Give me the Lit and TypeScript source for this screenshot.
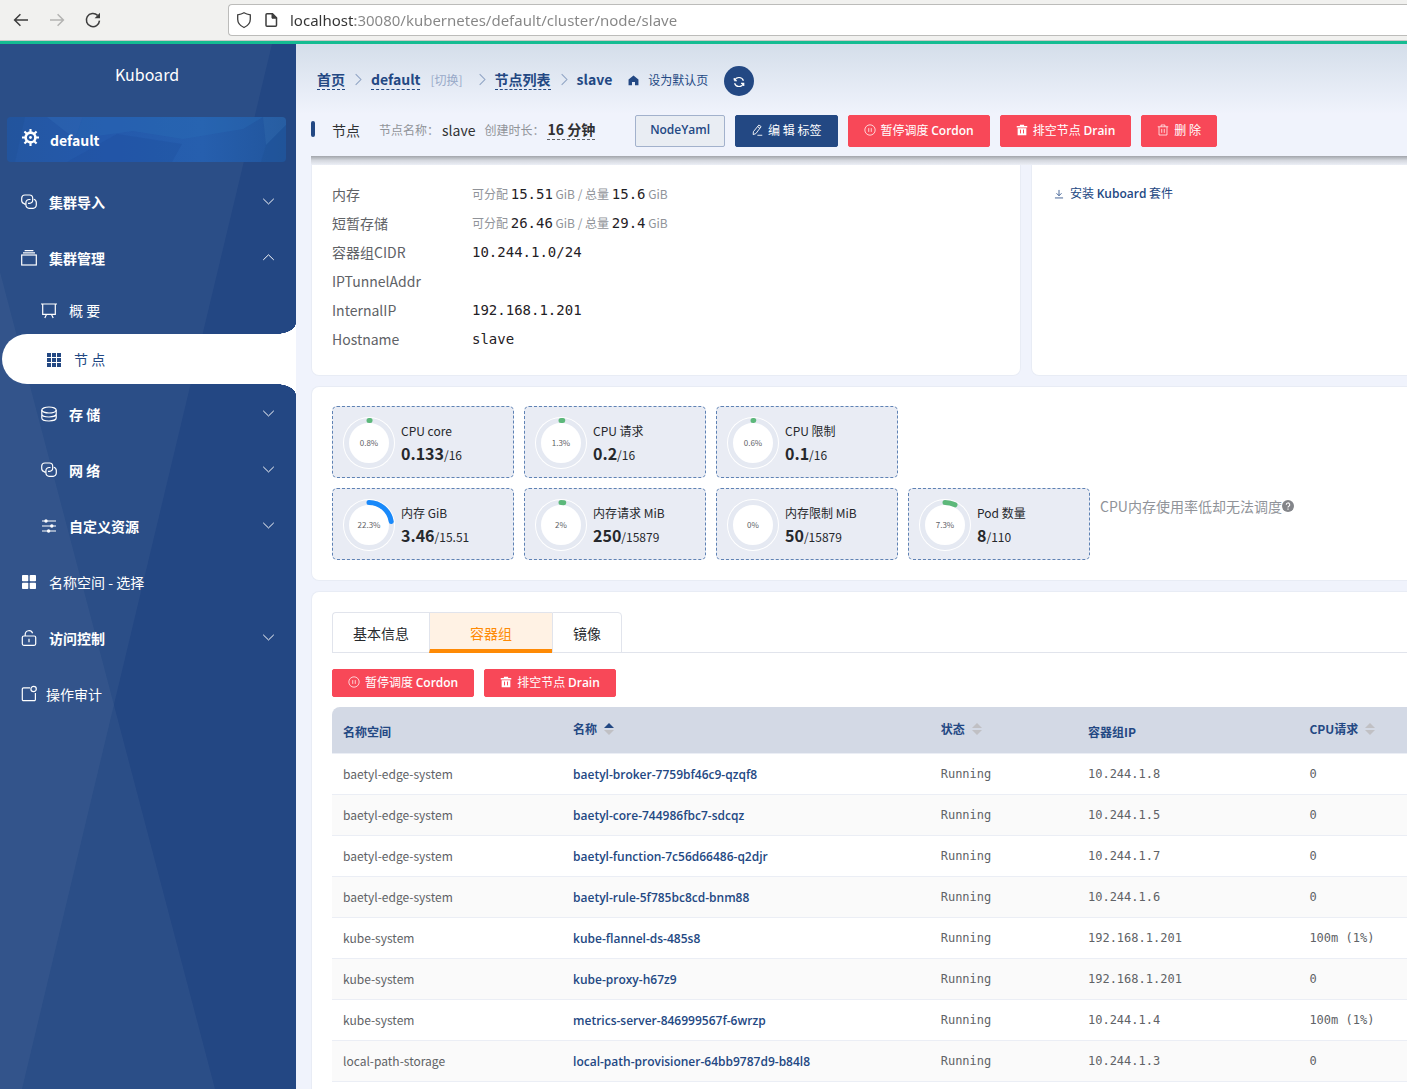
import { LitElement, html, css, svg, nothing } from 'lit';
import { customElement, state } from 'lit/decorators.js';
import { classMap } from 'lit/directives/class-map.js';

/* Outline icons on a 16-unit grid; they take the colour of the text around them. */
const shapes: Record<string, unknown> = {
  back: svg`<path d="M15 8H1.8M7.4 2.2 1.6 8l5.8 5.8" stroke-width="1.5"/>`,
  forward: svg`<path d="M1 8h13.2M8.6 2.2 14.4 8l-5.8 5.8" stroke-width="1.5"/>`,
  reload: svg`<path d="M14.5 8.6A6.6 6.6 0 1 1 12.6 3.4" stroke-width="1.5"/><path d="M15 .8v5.4H9.6z" fill="currentColor" stroke="none"/>`,
  shield: svg`<path d="M8 .8c2 1.2 4 1.700 6.300 2v4.500c0 3.500-2.500 6.500-6.300 8.200-3.800-1.700-6.300-4.700-6.300-8.200V2.800C4 2.500 6 2 8 .8z" stroke-width="1.300"/>`,
  page: svg`<path d="M4 1.700h5.500l4 4v7.600a1 1 0 0 1-1 1H4a1 1 0 0 1-1-1V2.700a1 1 0 0 1 1-1z" stroke-width="1.500"/><path d="M9 1.700v4.500h4.500z" fill="currentColor" stroke="currentColor"/>`,
  gear: svg`<circle cx="8" cy="8" r="4.600" stroke-width="2.400"/><circle cx="8" cy="8" r="1.300" fill="currentColor" stroke="none"/><path d="M8 0v3M8 13v3M0 8h3M13 8h3M2.300 2.300l2.200 2.200M11.500 11.500l2.200 2.200M2.300 13.700l2.200-2.200M11.500 4.500l2.200-2.200" stroke-width="2"/>`,
  link: svg`<path d="M4.800 10.200H3.900A3.200 3.200 0 0 1 3 9.500 3.200 3.200 0 0 1 .7 6.400V4A3.200 3.200 0 0 1 3.900 1h4.600a3.200 3.200 0 0 1 3.200 3.200v1.900a3.200 3.200 0 0 1-3.200 3.200H7"/><path d="M12.800 5.200c1.600.5 2.500 1.600 2.500 3.200v2.700a3.200 3.200 0 0 1-3.200 3.200H8.100a3.200 3.200 0 0 1-3.200-3.200V8.700a3.200 3.200 0 0 1 3.200-3.200H9.500"/>`,
  box: svg`<rect x=".7" y="5" width="14.600" height="10"/><path d="M2 2.900h12M3.600.6h8.800"/>`,
  board: svg`<path d="M0 2h16M1.700 2v10.300h12.600V2M5.500 12.500l-1.700 3.500M10.500 12.500l1.700 3.500"/>`,
  grid: svg`<path d="M1 2h4v4H1zM6 2h4v4H6zM11 2h4v4h-4zM1 7h4v4H1zM6 7h4v4H6zM11 7h4v4h-4zM1 12h4v4H1zM6 12h4v4H6zM11 12h4v4h-4z" fill="currentColor" stroke="none"/>`,
  disks: svg`<ellipse cx="8" cy="4" rx="7.200" ry="3"/><path d="M.8 4v8c0 1.700 3.200 3 7.200 3s7.200-1.300 7.200-3V4M.8 8c0 1.700 3.200 3 7.200 3s7.200-1.300 7.200-3"/>`,
  sliders: svg`<path d="M1 3h14M1 8h14M1 13h14"/><g fill="currentColor" stroke="none"><circle cx="5" cy="3" r="1.700"/><circle cx="10.800" cy="8" r="1.700"/><circle cx="7.600" cy="13" r="1.700"/></g>`,
  tiles: svg`<g fill="currentColor" stroke="none"><rect x="1" y="1" width="6.300" height="6.300" rx=".8"/><rect x="8.700" y="1" width="6.300" height="6.300" rx=".8"/><rect x="1" y="8.700" width="6.300" height="6.300" rx=".8"/><rect x="8.700" y="8.700" width="6.300" height="6.300" rx=".8"/></g>`,
  lock: svg`<rect x="1.300" y="6" width="13.400" height="9.300" rx="1.500"/><path d="M4.200 6V4.500A3.800 3.800 0 0 1 11.600 3.300M8 8.700v3.600"/>`,
  audit: svg`<path d="M9 1.800H2.500a1.200 1.200 0 0 0-1.200 1.200V13.500a1.200 1.200 0 0 0 1.200 1.200h10.700a1.200 1.200 0 0 0 1.200-1.200V7"/><circle cx="12.600" cy="3" r="2.700"/>`,
  down: svg`<path d="M1.500 4.700 8 11l6.500-6.300"/>`,
  up: svg`<path d="M1.500 11 8 4.700l6.500 6.300"/>`,
  right: svg`<path d="M4.500 1.500 11 8l-6.500 6.500" stroke-width="1.300"/>`,
  home: svg`<path d="M8 .8.8 6.700V15h5v-4.700h4.400V15h5V6.700z" fill="currentColor" stroke="none"/>`,
  refresh: svg`<path d="M1.700 5.500V2.600M1.700 6.300h3.600M2.200 6A6.200 6.200 0 0 1 13.900 6.300M14.300 13.400V9.700h-3.600M13.800 10A6.200 6.200 0 0 1 2.100 9.700" stroke-width="1.600"/>`,
  edit: svg`<path d="M10.500 1.300l3 2.200-7 9.300-3.600 1.300.3-3.900zM8.900 3.600l3 2.200M8.500 15h6.500" stroke-width="1.200"/>`,
  pause: svg`<circle cx="8" cy="8" r="6.900"/><path d="M6.300 5.500v5M9.700 5.500v5"/>`,
  binSolid: svg`<path d="M1 2.800h4.200V1h5.600v1.800H15v1.700H1zM2.200 5.500h11.600V15H2.200z" fill="currentColor" stroke="none"/><path d="M6 7.500v5M10 7.500v5" stroke="#f84858" stroke-width="1.300"/>`,
  bin: svg`<path d="M1 3.700h14M5.500 3.500V1.300h5v2.200M2.700 3.700v11h10.600v-11M6.300 6.500v5.300M9.700 6.500v5.300"/>`,
  download: svg`<path d="M8 1.500v9M4 6.800l4 4 4-4M1.500 14.300h13" stroke-width="1.300"/>`,
  help: svg`<circle cx="8" cy="8" r="8" fill="currentColor" stroke="none"/><path d="M5.700 6.200a2.300 2.300 0 1 1 3.400 2c-.8.400-1.100.8-1.100 1.700M8 11.300v1.600" stroke="#fff" stroke-width="1.500"/>`,
};

const icon = (name: string, cls = '') => html`<svg class="icon ${cls}" viewBox="0 0 16 16" aria-hidden="true">${shapes[name]}</svg>`;

interface MenuItem { label: string; icon: string; level?: number; kind: 'group' | 'leaf'; open?: boolean; active?: boolean; tight?: boolean; }

const menu: MenuItem[] = [
  { label: '集群导入', icon: 'link', kind: 'group' },
  { label: '集群管理', icon: 'box', kind: 'group', open: true },
  { label: '概 要', icon: 'board', kind: 'leaf', level: 2 },
  { label: '节 点', icon: 'grid', kind: 'leaf', level: 2, active: true },
  { label: '存 储', icon: 'disks', kind: 'group', level: 2 },
  { label: '网 络', icon: 'link', kind: 'group', level: 2 },
  { label: '自定义资源', icon: 'sliders', kind: 'group', level: 2 },
  { label: '名称空间 - 选择', icon: 'tiles', kind: 'leaf' },
  { label: '访问控制', icon: 'lock', kind: 'group' },
  { label: '操作审计', icon: 'audit', kind: 'leaf', tight: true },
];

const gauges = [
  [
    { label: 'CPU core', used: '0.133', total: '16', percent: 0.8 },
    { label: 'CPU 请求', used: '0.2', total: '16', percent: 1.3 },
    { label: 'CPU 限制', used: '0.1', total: '16', percent: 0.6 },
  ],
  [
    { label: '内存 GiB', used: '3.46', total: '15.51', percent: 22.3 },
    { label: '内存请求 MiB', used: '250', total: '15879', percent: 2 },
    { label: '内存限制 MiB', used: '50', total: '15879', percent: 0 },
    { label: 'Pod 数量', used: '8', total: '110', percent: 7.3 },
  ],
];

const pods = [
  ['baetyl-edge-system', 'baetyl-broker-7759bf46c9-qzqf8', '10.244.1.8', '0'],
  ['baetyl-edge-system', 'baetyl-core-744986fbc7-sdcqz', '10.244.1.5', '0'],
  ['baetyl-edge-system', 'baetyl-function-7c56d66486-q2djr', '10.244.1.7', '0'],
  ['baetyl-edge-system', 'baetyl-rule-5f785bc8cd-bnm88', '10.244.1.6', '0'],
  ['kube-system', 'kube-flannel-ds-485s8', '192.168.1.201', '100m (1%)'],
  ['kube-system', 'kube-proxy-h67z9', '192.168.1.201', '0'],
  ['kube-system', 'metrics-server-846999567f-6wrzp', '10.244.1.4', '100m (1%)'],
  ['local-path-storage', 'local-path-provisioner-64bb9787d9-b84l8', '10.244.1.3', '0'],
];

const base = css`
  * { box-sizing: border-box; }
  .icon { width: 16px; height: 16px; flex: none; fill: none; stroke: currentColor; stroke-width: 1; overflow: visible; }
  button, input { font: inherit; color: inherit; margin: 0; }
  button { cursor: pointer; background: none; border: 0; padding: 0; }
  a { color: inherit; text-decoration: none; }
`;

@customElement('browser-bar')
class BrowserBar extends LitElement {
  static styles = [base, css`
    :host { display: block; }
    .bar { display: flex; align-items: center; height: 44px; padding: 0 0 1px 12px; background: #f1f1ef; border-bottom: 3px solid #15bc92; box-shadow: inset 0 -1px #c9c9c7; color: #3d3d3d; }
    .nav { display: flex; width: 36px; height: 32px; align-items: center; padding-left: 1px; }
    .nav:disabled { color: #b4b4b2; }
    .reload { margin-right: 108px; }
    .field { flex: 1; display: flex; align-items: center; gap: 11px; height: 32px; padding-left: 7px; background: #fff; border: 1px solid #bcbcba; border-right: 0; border-radius: 4px 0 0 4px; }
    .address { flex: 1; min-width: 0; height: 28px; padding: 0; border: 0; outline: 0; font: 15px "Noto Sans", sans-serif;
      background: linear-gradient(to right, #333 65px, #858585 65px); background-clip: text; -webkit-background-clip: text; -webkit-text-fill-color: transparent; }
  `];

  render() {
    return html`<div class="bar">
      <button class="nav" aria-label="后退">${icon('back')}</button>
      <button class="nav" aria-label="前进" disabled>${icon('forward')}</button>
      <button class="nav reload" aria-label="刷新">${icon('reload')}</button>
      <div class="field">${icon('shield')}${icon('page')}
        <input class="address" type="text" aria-label="地址" .value=${'localhost:30080/kubernetes/default/cluster/node/slave'}>
      </div>
    </div>`;
  }
}

@customElement('side-menu')
class SideMenu extends LitElement {
  static styles = [base, css`
    :host { display: block; position: relative; background: #234783; color: #fff; }
    .facets { position: absolute; inset: 0; width: 100%; height: 100%; }
    .content { position: relative; }
    .content .icon { stroke-width: 1.2; }
    .logo { display: block; padding: 19px 0 0 115px; font-size: 16px; line-height: 22px; }
    .cluster { position: relative; display: flex; align-items: center; gap: 11px; height: 45px; margin: 32px 10px 12px 7px; padding-left: 15px; border-radius: 4px; overflow: hidden; background: linear-gradient(90deg, #2457a2, #2459ac 35%, #265fae 70%, #21559c); font-weight: 700; }
    .cluster .label { position: relative; }
    .cluster .icon { position: relative; width: 17px; height: 17px; margin-bottom: 4px; }
    .item { position: relative; display: flex; align-items: center; gap: 12px; width: 100%; height: 56px; padding: 0 20px 0 21px; text-align: left; }
    .item.level2 { padding-left: 41px; }
    .item.group { font-weight: 700; }
    .item.leaf.level2 { height: 48px; }
    .item.tight { gap: 9px; }
    .item .label { flex: 1; }
    .arrow { width: 13px; height: 13px; margin: 0 1px 2px 0; }
    .item.leaf.level2.active { width: auto; height: 50px; margin: 0 0 2px 2px; padding-left: 44px; border-radius: 25px 0 0 25px; background: #fff; color: #234883; }
    .active::before, .active::after { content: ""; position: absolute; right: 0; width: 20px; height: 11px; }
    .active::before { bottom: 100%; background: radial-gradient(ellipse 20px 11px at 0 0, transparent 98%, #fff); }
    .active::after { top: 100%; background: radial-gradient(ellipse 20px 11px at 0 100%, transparent 98%, #fff); }
  `];

  render() {
    return html`
      <svg class="facets" viewBox="0 0 296 1045" preserveAspectRatio="none" aria-hidden="true">
        <path d="M0 0H272L22 1045H0z" fill="#fff" fill-opacity=".04"/>
        <path d="M0 228 215 1045H0z" fill="#fff" fill-opacity=".04"/>
      </svg>
      <nav class="content">
        <a class="logo" href="#">Kuboard</a>
        <a class="cluster" href="#default">
          <svg class="facets" viewBox="0 0 279 45" preserveAspectRatio="none" aria-hidden="true">
            <path d="M0 0h18L8 45H0z" fill="#1f4f96" fill-opacity=".35"/><path d="M40 0h36l-8 22z" fill="#3470b8" fill-opacity=".3"/>
            <path d="M68 22 76 0h180l-20 12-60 10-50-8z" fill="#2c6fba" fill-opacity=".3"/><path d="M60 45l50-28 65 10-10 18z" fill="#1d4b9c" fill-opacity=".3"/>
            <path d="M256 0l3 28 20-20V0z" fill="#3a76b5" fill-opacity=".25"/><path d="M259 28l20-20v37h-25z" fill="#1d4f92" fill-opacity=".3"/>
          </svg>${icon('gear')}<span class="label">default</span></a>
        ${menu.map((m) => {
          const cls = classMap({ item: true, level2: m.level === 2, group: m.kind === 'group', leaf: m.kind === 'leaf', active: !!m.active, tight: !!m.tight });
          return m.kind === 'group'
            ? html`<button class=${cls} aria-expanded=${m.open ? 'true' : 'false'}>${icon(m.icon)}<span class="label">${m.label}</span>${icon(m.open ? 'up' : 'down', 'arrow')}</button>`
            : html`<a class=${cls} href="#" aria-current=${m.active ? 'page' : nothing}>${icon(m.icon)}<span class="label">${m.label}</span></a>`;
        })}
      </nav>`;
  }
}

const buttons = css`
  .btn { display: inline-flex; align-items: center; gap: 5px; height: 32px; padding: 0 15px 2px; border: 1px solid #f84858; border-radius: 2px; background: #f84858; color: #fff; font-size: 12px; line-height: 18px; white-space: nowrap; }
  .btn .icon { width: 12px; height: 12px; }
  .btn.small { height: 28px; }
  .btn.primary { background: #234883; border-color: #234883; }
  .btn.plain { padding: 0 14px 2px; background: #e9edf3; border-color: #a2b1cc; color: #234883; }
  .latin { font-family: "Open Sans", sans-serif; font-weight: 600; }
`;
const cordon = (cls = '') => html`<button class="btn ${cls}">${icon('pause')}<span>暂停调度 <span class="latin">Cordon</span></span></button>`;
const drain = (cls = '') => html`<button class="btn ${cls}">${icon('binSolid')}<span>排空节点 <span class="latin">Drain</span></span></button>`;

@customElement('node-header')
class NodeHeader extends LitElement {
  static styles = [base, buttons, css`
    :host { display: block; }
    .head { height: 112px; padding-top: 22px; white-space: nowrap; }
    .crumbs { display: flex; align-items: center; height: 30px; padding-left: 6px; color: #234883; line-height: 20px; }
    .crumb, .here, .sep { margin-bottom: 4px; }
    .crumb { font-weight: 700; border-bottom: 1px dashed #234883; }
    .sep { width: 13px; height: 13px; margin-left: 7px; margin-right: 6px; color: #8fa3c4; }
    .switch { margin: 0 6px 2px 10px; font-size: 12px; color: #98a9c8; }
    .default { display: flex; align-items: center; gap: 9px; margin: 0 16px 2px; font-size: 12px; }
    .default .icon { width: 11px; height: 11px; }
    .refresh { display: flex; align-items: center; justify-content: center; width: 30px; height: 30px; border-radius: 50%; background: #234883; color: #fff; }
    .refresh .icon { width: 12px; height: 12px; margin-top: 2px; }
    .bar { display: flex; align-items: center; height: 32px; margin-top: 19px; color: #303133; line-height: 20px; }
    .mark { width: 4px; height: 16px; margin: 0 17px 4px 0; border-radius: 2px; background: #234883; }
    .kind, .key, .node, .age { margin-bottom: 3px; }
    .key { margin-left: 9px; margin-right: 3px; font-size: 12px; color: #909399; }
    .kind { margin-right: 10px; }
    .age { border-bottom: 1px dashed #606266; }
    .actions { display: flex; gap: 10px; margin-left: 40px; }
    .shade { height: 9px; background: linear-gradient(#a2a5ab, #d5d8df 50%, #eceff6); }
  `];

  render() {
    return html`<header>
      <div class="head">
        <nav class="crumbs" aria-label="路径">
          <a class="crumb" href="#home">首页</a>${icon('right', 'sep')}
          <a class="crumb" href="#cluster">default</a><a class="switch" href="#switch">[切换]</a>${icon('right', 'sep')}
          <a class="crumb" href="#nodes">节点列表</a>${icon('right', 'sep')}<b class="here">slave</b>
          <button class="default">${icon('home')}<span>设为默认页</span></button>
          <button class="refresh" aria-label="刷新">${icon('refresh')}</button>
        </nav>
        <div class="bar">
          <span class="mark"></span><span class="kind">节点</span>
          <span class="key">节点名称：</span><span class="node">slave</span>
          <span class="key">创建时长：</span><b class="age">16 分钟</b>
          <div class="actions">
            <button class="btn plain"><span class="latin">NodeYaml</span></button>
            <button class="btn primary">${icon('edit')}<span>编 辑 标签</span></button>
            ${cordon()}${drain()}
            <button class="btn">${icon('bin')}<span>删 除</span></button>
          </div>
        </div>
      </div>
      <div class="shade"></div>
    </header>`;
  }
}

@customElement('node-info')
class NodeInfo extends LitElement {
  static styles = [base, css`
    :host { display: block; }
    .info { display: grid; grid-template-columns: 140px 1fr; margin: 0; padding: 15px 20px 21px; line-height: 29px; color: #606266; }
    dd { margin: 0; font-family: "DejaVu Sans Mono", monospace; color: #1f2125; white-space: nowrap; }
    .unit { font: 12px "Noto Sans CJK SC", sans-serif; color: #909399; }
  `];

  private amount(free: string, total: string) {
    return html`<span class="unit">可分配 </span>${free}<span class="unit"> GiB / 总量 </span>${total}<span class="unit"> GiB</span>`;
  }

  render() {
    return html`<dl class="info">
      <dt>内存</dt><dd>${this.amount('15.51', '15.6')}</dd>
      <dt>短暂存储</dt><dd>${this.amount('26.46', '29.4')}</dd>
      <dt>容器组CIDR</dt><dd>10.244.1.0/24</dd>
      <dt>IPTunnelAddr</dt><dd></dd>
      <dt>InternalIP</dt><dd>192.168.1.201</dd>
      <dt>Hostname</dt><dd>slave</dd>
    </dl>`;
  }
}

@customElement('usage-gauge')
class UsageGauge extends LitElement {
  static properties = { item: { attribute: false } };
  declare item: { label: string; used: string; total: string; percent: number };
  static styles = [base, css`
    :host { display: block; }
    .tile { display: flex; align-items: center; gap: 6px; width: 182px; height: 72px; padding: 1px 10px 0; border: 1px dashed #5f82b4; border-radius: 5px; background: #e9ecf4; color: #26282c; white-space: nowrap; }
    .ring { width: 52px; height: 52px; flex: none; }
    .percent { font: 8px "Noto Sans CJK SC", sans-serif; fill: #606266; text-anchor: middle; }
    .text { padding-top: 3px; }
    .label { font-size: 12px; line-height: 20px; }
    .value { font-size: 12px; line-height: 24px; }
    .used { font-size: 16px; }
  `];

  render() {
    const { label, used, total, percent } = this.item;
    const length = 2 * Math.PI * 22.5;
    return html`<div class="tile">
      <svg class="ring" viewBox="0 0 52 52" role="img" aria-label="${percent}%">
        <circle cx="26" cy="26" r="26" fill="#fff"/>
        <circle cx="26" cy="26" r="22.500" fill="#fff" stroke="#e5e9f2" stroke-width="5"/>
        ${percent ? svg`<circle cx="26" cy="26" r="22.500" fill="none" stroke=${percent > 20 ? '#1989fa' : '#5cb87a'} stroke-width="5" stroke-linecap="round" stroke-dasharray="${(length * percent) / 100} ${length}" transform="rotate(-90 26 26)"/>` : nothing}
        <text class="percent" x="26" y="29">${percent}%</text>
      </svg>
      <div class="text"><div class="label">${label}</div><div class="value"><b class="used">${used}</b>/${total}</div></div>
    </div>`;
  }
}

@customElement('pod-panel')
class PodPanel extends LitElement {
  @state() private tab = '容器组';
  static styles = [base, buttons, css`
    :host { display: block; }
    .tabs { display: flex; border-bottom: 1px solid #e1e4ec; }
    .tab { height: 41px; margin-bottom: -1px; padding: 0 20px; border: 1px solid #e1e4ec; border-right-width: 0; color: #26282c; }
    .tab:first-child { border-top-left-radius: 4px; }
    .tab:last-child { border-right-width: 1px; border-top-right-radius: 4px; }
    .tab.on { padding: 3px 40px 0; background: #fff2e4; border-bottom: 4px solid #fe8a05; color: #fe8a05; }
    .tools { display: flex; gap: 10px; margin: 16px 0 10px; }
    .pods { width: 100%; table-layout: fixed; border-collapse: separate; border-spacing: 0; font-size: 12px; line-height: 20px; color: #606266; }
    .ns { width: 21.4%; } .name { width: 34.2%; } .status { width: 13.7%; } .ip { width: 20.6%; }
    th, td { height: 41px; padding: 0 11px; border-bottom: 1px solid #ebeef5; text-align: left; white-space: nowrap; }
    th { height: 47px; padding-top: 4px; background: #d3d9e5; color: #234883; font-weight: 700; }
    th:first-child { border-top-left-radius: 8px; }
    tbody tr:nth-child(even) { background: #fafafa; }
    .sort { display: flex; align-items: center; gap: 7px; height: 20px; margin-bottom: 6px; font-weight: 700; }
    .sort .icon { width: 10px; height: 12px; fill: #c0c0c4; stroke: none; }
    .sort .asc { fill: #234883; }
    .mono { font-family: "DejaVu Sans Mono", monospace; }
    .link { font-family: "Open Sans", sans-serif; font-weight: 600; color: #234883; }
  `];

  private sortHead(text: string, ascending = false) {
    return html`<button class="sort">${text}<svg class="icon" viewBox="0 0 10 12" aria-hidden="true">
      <path class=${ascending ? 'asc' : ''} d="M0 5 5 0l5 5z"/><path d="M0 7l5 5 5-5z"/></svg></button>`;
  }

  render() {
    return html`
      <div class="tabs" role="tablist">
        ${['基本信息', '容器组', '镜像'].map((t) => html`<button role="tab" class=${classMap({ tab: true, on: this.tab === t })}
          aria-selected=${this.tab === t ? 'true' : 'false'} @click=${() => (this.tab = t)}>${t}</button>`)}
      </div>
      <div class="tools">${cordon('small')}${drain('small')}</div>
      <table class="pods">
        <colgroup><col class="ns"><col class="name"><col class="status"><col class="ip"><col></colgroup>
        <thead><tr><th>名称空间</th><th>${this.sortHead('名称', true)}</th><th>${this.sortHead('状态')}</th><th>容器组IP</th><th>${this.sortHead('CPU请求')}</th></tr></thead>
        <tbody>${pods.map(([ns, name, ip, cpu]) => html`<tr>
          <td>${ns}</td><td><a class="link" href="#${name}">${name}</a></td><td class="mono">Running</td><td class="mono">${ip}</td><td class="mono">${cpu}</td>
        </tr>`)}</tbody>
      </table>`;
  }
}

@customElement('app-root')
class AppRoot extends LitElement {
  static styles = [base, css`
    :host { display: flex; flex-direction: column; min-height: 100vh; font: 14px/20px "Noto Sans CJK SC", sans-serif; }
    .body { flex: 1; display: grid; grid-template-columns: 296px minmax(0, 1fr); }
    .main { display: flex; flex-direction: column; min-width: 0; padding-left: 15px; overflow: hidden; background: linear-gradient(#d4deea, #f0f3fc 70px); }
    .cards { flex: 1; display: flex; flex-direction: column; gap: 10px; }
    .pair { display: grid; grid-template-columns: 710fr 376fr; gap: 10px; }
    .card { background: #fff; border: 1px solid #e8ecf5; border-radius: 8px; }
    .open { border-right: 0; border-top-right-radius: 0; border-bottom-right-radius: 0; }
    .pair .card { border-top: 0; border-top-left-radius: 0; border-top-right-radius: 0; }
    .install { display: inline-flex; align-items: center; gap: 6px; margin: 18px 22px; font-size: 12px; color: #234883; }
    .install .icon { width: 10px; height: 10px; }
    .latin { font-family: "Open Sans", sans-serif; font-weight: 600; }
    .usage { display: grid; gap: 10px; padding: 19px 0 20px 20px; }
    .row { display: flex; gap: 10px; }
    .hint { display: flex; align-items: center; height: 20px; margin-top: 8px; color: #909399; white-space: nowrap; }
    .hint .icon { width: 12px; height: 12px; color: #83858a; }
    .pods { flex: 1; border-bottom: 0; border-bottom-left-radius: 0; padding: 20px 0 0 20px; }
  `];

  render() {
    return html`
      <browser-bar></browser-bar>
      <div class="body">
        <side-menu></side-menu>
        <main class="main">
          <node-header></node-header>
          <div class="cards">
            <div class="pair">
              <section class="card"><node-info></node-info></section>
              <section class="card open"><a class="install" href="#install">${icon('download')}<span>安装 <span class="latin">Kuboard</span> 套件</span></a></section>
            </div>
            <section class="card open usage">
              ${gauges.map((row, i) => html`<div class="row">${row.map((g) => html`<usage-gauge .item=${g}></usage-gauge>`)}
                ${i === 1 ? html`<div class="hint">CPU内存使用率低却无法调度${icon('help')}</div>` : nothing}</div>`)}
            </section>
            <section class="card open pods"><pod-panel></pod-panel></section>
          </div>
        </main>
      </div>`;
  }
}
